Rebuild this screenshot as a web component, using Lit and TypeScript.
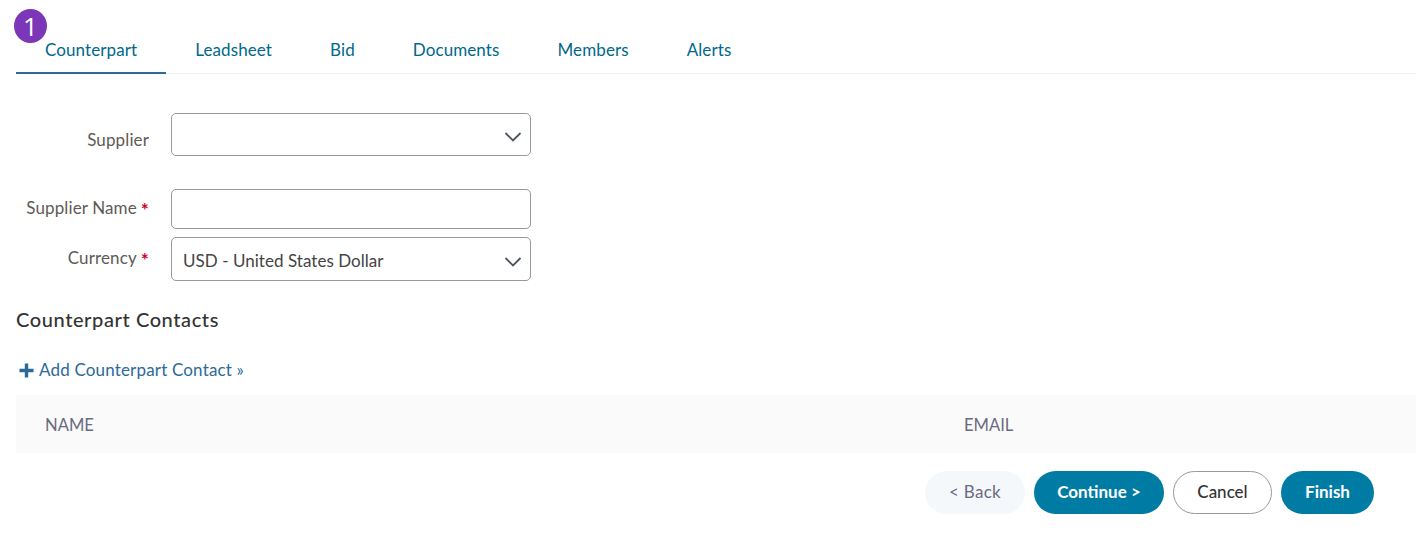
import { LitElement, html, css } from "lit";
import { customElement } from "lit/decorators.js";

const chevron = html`<svg class="chev" width="18" height="10" viewBox="0 0 18 10"><path d="M1.5 1 L9 8.5 L16.5 1" fill="none" stroke="#4a5560" stroke-width="1.8"/></svg>`;

@customElement("app-root")
export class AppRoot extends LitElement {
  static styles = css`
    :host { display: block; position: relative; height: 539px; background: #fff; font-family: "Lato", "Open Sans", sans-serif; font-size: 17px; color: #4a4a4a; overflow: hidden; }
    .badge { position: absolute; left: 14px; top: 9px; width: 33px; height: 34px; border-radius: 50%; background: #7b37b8; color: #fff; font-size: 26px; line-height: 34px; text-align: center; font-family: "Open Sans", sans-serif; }
    .wrap { padding: 26px 0 0 16px; }
    .tabs { display: flex; border-bottom: 1px solid #f0f0f0; height: 48px; box-sizing: border-box; }
    .tab { padding: 13px 29px 0; color: #00688b; height: 48px; box-sizing: border-box; line-height: 22px; letter-spacing: .1px; }
    .tab.active { border-bottom: 2px solid #2d6a96; }
    .rows { display: grid; grid-template-columns: 133px 360px; column-gap: 22px; padding-top: 39px; align-items: start; }
    .lab { text-align: right; color: #5f5a55; line-height: 22px; white-space: nowrap; letter-spacing: .12px; }
    .req { color: #d0021b; margin-left: 4px; font-weight: 700; font-size: 19px; line-height: 10px; vertical-align: -3px; }
    .field { box-sizing: border-box; width: 360px; border: 1px solid #999; border-radius: 5px; display: flex; align-items: center; justify-content: space-between; padding: 0 8px 0 11px; background: #fff; color: #444; }
    .f1 { height: 43px; margin-bottom: 33px; }
    .f2 { height: 40px; margin-bottom: 8px; }
    .f3 { height: 44px; }
    .chev { margin-top: 5px; }
    .val { margin-top: 2px; letter-spacing: .04px; }
    .l1 { padding-top: 16px; }
    .l2 { padding-top: 8px; }
    .l3 { padding-top: 10px; }
    h2 { margin: 26px 0 0; font-size: 20px; font-weight: 500; color: #333; line-height: 24px; letter-spacing: .6px; }
    .add { display: flex; align-items: center; gap: 5px; margin-top: 28px; color: #2d6a96; line-height: 22px; padding-left: 3px; letter-spacing: .17px; }
    .thead { display: grid; grid-template-columns: 919px 1fr; background: #fafafa; height: 58px; align-items: center; margin-top: 14px; padding: 2px 0 0 29px; box-sizing: border-box; color: #6b6b80; font-size: 16.6px; }
    .actions { display: flex; justify-content: flex-end; gap: 9px; padding: 18px 42px 0 0; }
    .btn { box-sizing: border-box; height: 43px; border-radius: 22px; display: flex; align-items: center; justify-content: center; padding-bottom: 2px; }
    .back { width: 100px; background: #f5f8fb; color: #6b6b80; letter-spacing: .25px; }
    .pri { background: #007ba4; color: #fff; font-weight: 700; }
    .cont { width: 130px; }
    .fin { width: 93px; }
    .cancel { width: 99px; border: 1px solid #999; color: #333; font-weight: 500; }
  `;

  render() {
    return html`
      <div class="wrap">
        <div class="tabs">
          ${["Counterpart", "Leadsheet", "Bid", "Documents", "Members", "Alerts"].map(
            (t, i) => html`<div class="tab ${i === 0 ? "active" : ""}">${t}</div>`
          )}
        </div>
        <div class="rows">
          <div class="lab l1">Supplier</div>
          <div class="field f1"><span></span>${chevron}</div>
          <div class="lab l2">Supplier Name<span class="req">*</span></div>
          <div class="field f2"></div>
          <div class="lab l3">Currency<span class="req">*</span></div>
          <div class="field f3"><span class="val">USD - United States Dollar</span>${chevron}</div>
        </div>
        <h2>Counterpart Contacts</h2>
        <div class="add">
          <svg width="15" height="15" viewBox="0 0 15 15"><path d="M7.5 0.5 V14.5 M0.5 7.5 H14.5" stroke="#2d6a96" stroke-width="3.4"/></svg>
          <span>Add Counterpart Contact »</span>
        </div>
        <div class="thead"><span>NAME</span><span>EMAIL</span></div>
        <div class="actions">
          <div class="btn back">&lt; Back</div>
          <div class="btn pri cont">Continue &gt;</div>
          <div class="btn cancel">Cancel</div>
          <div class="btn pri fin">Finish</div>
        </div>
      </div>
      <div class="badge">1</div>
    `;
  }
}
